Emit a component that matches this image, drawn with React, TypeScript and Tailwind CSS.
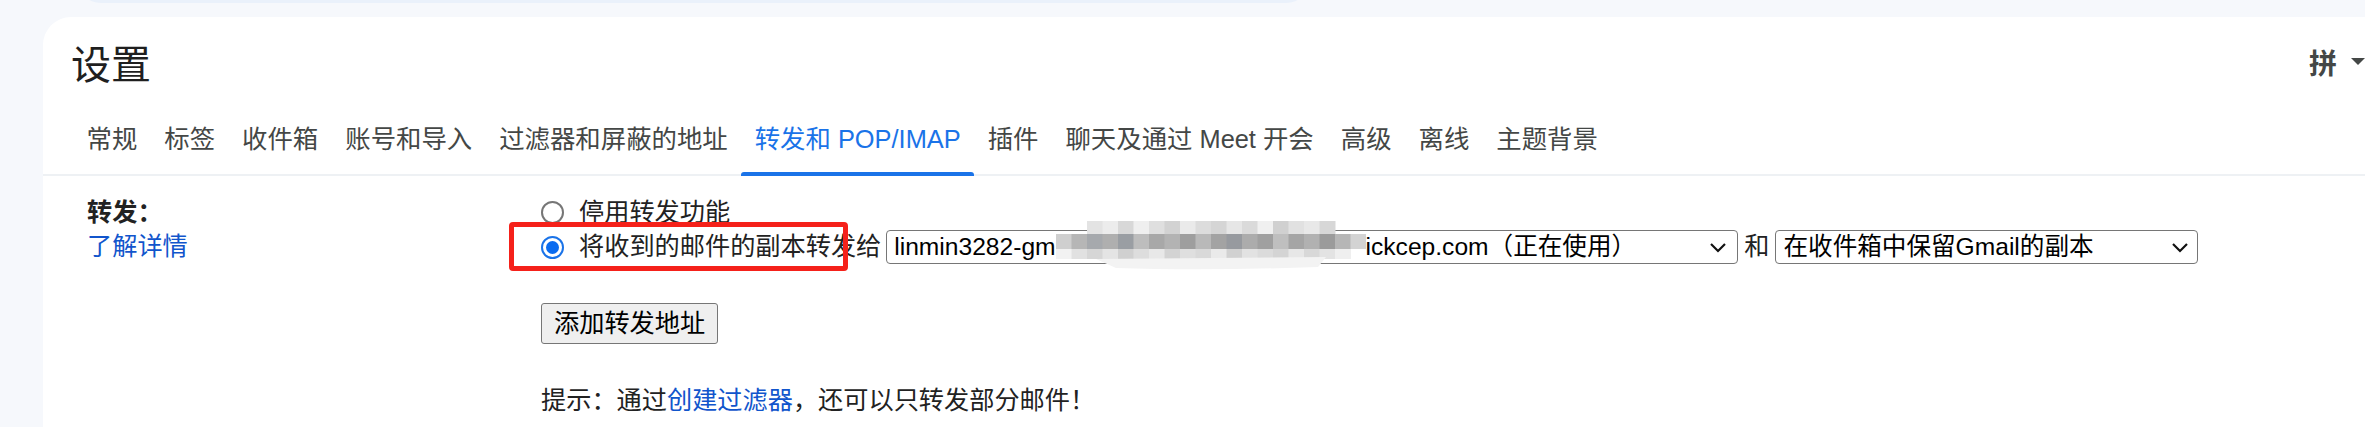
import React from "react";

/* ── Data ── */
const TABS = [
  "常规",
  "标签",
  "收件箱",
  "账号和导入",
  "过滤器和屏蔽的地址",
  "转发和 POP/IMAP",
  "插件",
  "聊天及通过 Meet 开会",
  "高级",
  "离线",
  "主题背景",
];
const ACTIVE_TAB = "转发和 POP/IMAP";

// pixelated blur over the hidden part of the address
const MOSAIC_TOP = ["", "", "#e3e3e3", "#ececec", "#d8d8d8", "#efefef", "#dfdfdf", "#d2d2d2", "#eaeaea", "#dcdcdc", "#d5d5d5", "#e6e6e6", "#dadada", "#f0f0f0", "#d0d0d0", "#e1e1e1", "#e8e8e8", "#d7d7d7", "", ""];
const MOSAIC_MID = ["#cfcfcf", "#b6b6b6", "#a6a9ad", "#afafaf", "#9a9ea3", "#bdbdbd", "#a8a8a8", "#b3b3b3", "#9e9e9e", "#b9b9b9", "#a3a3a3", "#979a9f", "#acacac", "#a0a0a0", "#bfbfbf", "#a5a5a5", "#b1b1b1", "#9b9b9b", "#b6b6b6", "#d3d3d3"];
const MOSAIC_BOT = ["#f2f2f2", "#e1e1e1", "#d6d6d6", "#e4e4e4", "#d0d0d0", "#dddddd", "#e8e8e8", "#d3d3d3", "#dfdfdf", "#d9d9d9", "#eaeaea", "#d1d1d1", "#e2e2e2", "#dbdbdb", "#d4d4d4", "#e7e7e7", "#d8d8d8", "#e3e3e3", "#efefef", ""];

function Mosaic() {
  const cw = 15.5;
  return (
    <svg width="310" height="50" viewBox="0 0 310 50" className="absolute left-0 top-[-16px]">
      {MOSAIC_TOP.map((c, i) => c && <rect key={"t" + i} x={i * cw} y={0} width={cw + 0.5} height={13} fill={c} />)}
      {MOSAIC_MID.map((c, i) => c && <rect key={"m" + i} x={i * cw} y={13} width={cw + 0.5} height={15} fill={c} />)}
      {MOSAIC_BOT.map((c, i) => c && <rect key={"b" + i} x={i * cw} y={28} width={cw + 0.5} height={10} fill={c} />)}
      <path d="M40 38 L270 36 L262 46 Q150 50 60 47 Z" fill="#f3f3f3" />
    </svg>
  );
}

function Chevron() {
  return (
    <svg width="18" height="11" viewBox="0 0 18 11" className="shrink-0">
      <path d="M2 2 L9 9 L16 2" fill="none" stroke="#111" strokeWidth="2.2" />
    </svg>
  );
}

function Radio({ checked }: { checked?: boolean }) {
  return checked ? (
    <div className="w-[23px] h-[23px] rounded-full border-2 border-[#1a73e8] p-[3px] shrink-0">
      <div className="w-full h-full rounded-full bg-[#0b6cf0]" />
    </div>
  ) : (
    <div className="w-[23px] h-[23px] rounded-full border-2 border-[#767676] bg-white shrink-0" />
  );
}

export default function App() {
  return (
    <div className="w-[2365px] h-[427px] overflow-hidden bg-[#f6f8fc] flex flex-col font-['Liberation_Sans','Noto_Sans_CJK_SC',sans-serif]">
      {/* search bar bottom edge */}
      <div className="h-[17px] shrink-0 overflow-hidden pl-[77px]">
        <div className="w-[1233px] h-[48px] -mt-[45px] rounded-full bg-[#eaf1fb]" />
      </div>

      {/* Settings card */}
      <div className="flex-1 ml-[43px] bg-white rounded-tl-[28px] flex flex-col">
        {/* Header */}
        <div className="h-[90px] flex items-center pl-[28px]">
          <h1 className="text-[40px] leading-none text-[#1f1f1f] font-['Noto_Sans_CJK_SC',sans-serif]">设置</h1>
          <div className="ml-auto flex items-center gap-[14px] text-[#444746]">
            <span className="text-[28px] leading-none font-bold font-['Noto_Sans_CJK_SC',sans-serif]">拼</span>
            <svg width="14" height="8" viewBox="0 0 14 8">
              <path d="M0 0 L14 0 L7 7 Z" fill="#444746" />
            </svg>
          </div>
        </div>

        {/* Tabs */}
        <div className="flex pl-[30px] border-b-2 border-[#eef1f4]">
          {TABS.map((t) => {
            const active = t === ACTIVE_TAB;
            return (
              <div key={t} className="flex flex-col -mb-[2px]">
                <div
                  className={`pt-[17px] h-[47px] px-[13.5px] text-[25.4px] leading-[30px] whitespace-nowrap ${
                    active ? "text-[#1a73e8]" : "text-[#444746]"
                  }`}
                >
                  {t}
                </div>
                <div className="h-[18px]" />
                <div className={`h-[4px] rounded-t-[3px] ${active ? "bg-[#1a73e8]" : ""}`} />
              </div>
            );
          })}
        </div>

        {/* Forwarding section */}
        <div className="flex pl-[44px] pt-[19px] text-[25.2px] text-[#222]">
          <div className="w-[454px] flex flex-col">
            <div className="h-[35px] flex items-center font-bold">转发：</div>
            <div className="h-[34px] flex items-center">
              <a className="text-[#1155cc]">了解详情</a>
            </div>
          </div>

          <div className="flex flex-col">
            <div className="h-[35px] flex items-center gap-[15px]">
              <Radio />
              <span>停用转发功能</span>
            </div>

            <div className="h-[34px] flex items-center relative">
              {/* annotation box */}
              <div className="absolute left-[-32px] top-[-8px] w-[339px] h-[49px] border-[5px] border-[#f5211a] rounded-[4px]" />
              <Radio checked />
              <span className="ml-[15px] whitespace-nowrap">将收到的邮件的副本转发给</span>

              <div className="ml-[5px] w-[852px] h-[34px] border border-[#767676] rounded-[4px] flex items-center pl-[7px] pr-[10px] bg-white text-black text-[24.6px]">
                <span className="whitespace-nowrap">linmin3282-gm</span>
                <span className="relative inline-block w-[310px] h-[20px] shrink-0">
                  <Mosaic />
                </span>
                <span className="whitespace-nowrap">ickcep.com（正在使用）</span>
                <span className="ml-auto">
                  <Chevron />
                </span>
              </div>

              <span className="mx-[6px]">和</span>

              <div className="w-[423px] h-[34px] border border-[#767676] rounded-[4px] flex items-center pl-[7px] pr-[8px] bg-white text-black text-[24.6px]">
                <span className="whitespace-nowrap">在收件箱中保留Gmail的副本</span>
                <span className="ml-auto">
                  <Chevron />
                </span>
              </div>
            </div>

            <div className="mt-[39px]">
              <button className="h-[41px] px-[12px] bg-[#efefef] border border-[#767676] rounded-[3px] text-black leading-none">
                添加转发地址
              </button>
            </div>

            <div className="mt-[41px] leading-[30px]">
              提示：通过<a className="text-[#1155cc]">创建过滤器</a>，还可以只转发部分邮件！
            </div>
          </div>
        </div>
      </div>
    </div>
  );
}
